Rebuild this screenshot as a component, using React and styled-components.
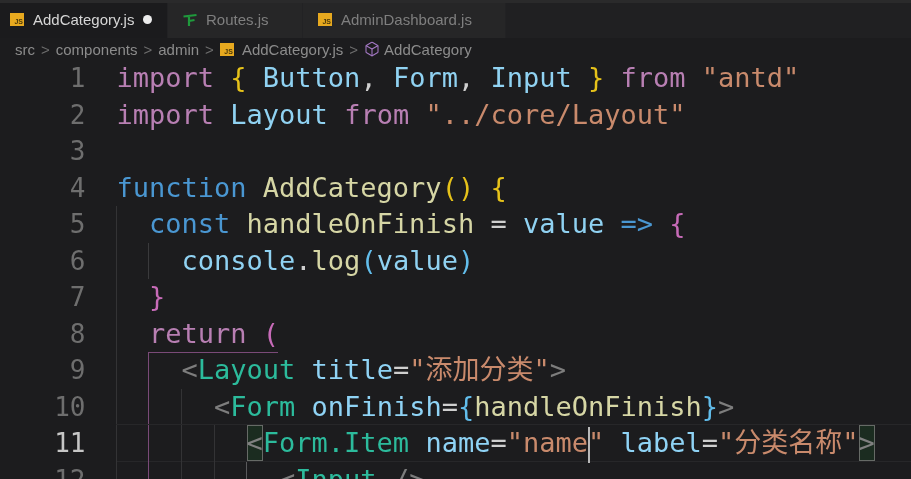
import React from "react";
import styled, { createGlobalStyle } from "styled-components";
import { Box } from "lucide-react";

const Global = createGlobalStyle`
  html, body { margin: 0; padding: 0; background: #1b1b1d; }
  body { width: 911px; height: 479px; overflow: hidden; }
`;

const Editor = styled.div`
  width: 911px;
  height: 479px;
  overflow: hidden;
  display: flex;
  flex-direction: column;
  background: #1c1c1e;
  filter: blur(0.45px);
`;

const TabBar = styled.div`
  display: flex;
  height: 35px;
  flex: none;
  border-top: 3px solid #2a2a2b;
  background: #202022;
`;

const Tab = styled.div`
  width: ${(p) => p.$w}px;
  flex: none;
  display: flex;
  align-items: center;
  gap: ${(p) => p.$gap || 9}px;
  padding-left: ${(p) => p.$pl || 10}px;
  padding-bottom: 2px;
  box-sizing: border-box;
  background: ${(p) => (p.$active ? "#1b1b1d" : "#262627")};
  color: ${(p) => (p.$active ? "#d6d6d6" : "#7f7f7f")};
  font: 15px "Liberation Sans", Arial, sans-serif;
  border-right: 1px solid #222224;
`;

const Dot = styled.span`
  width: 9px;
  height: 9px;
  border-radius: 50%;
  background: #ececec;
`;

const JsBadge = styled.span`
  width: 14px;
  height: 13px;
  flex: none;
  display: flex;
  align-items: flex-end;
  justify-content: flex-end;
  background: #e7a91f;
  color: #4a3808;
  font: bold 7px/8px "Liberation Sans", Arial, sans-serif;
  padding-right: 1px;
  box-sizing: border-box;
`;

const Crumbs = styled.div`
  display: flex;
  align-items: center;
  height: 22px;
  flex: none;
  padding-left: 15px;
  color: #8c8c8c;
  font: 15px "Liberation Sans", Arial, sans-serif;
  background: #1c1c1e;
`;

const Sep = styled.span`
  margin: 0 ${(p) => p.$r || 6}px 0 ${(p) => p.$l || 6}px;
  color: #6d6d6d;
`;

const CrumbIcon = styled.span`
  display: inline-flex;
  margin-right: ${(p) => p.$mr || 8}px;
  color: #a478c4;
`;

const Code = styled.div`
  font-family: "DejaVu Sans Mono", "Noto Sans CJK SC", monospace;
  font-size: 27px;
  line-height: 36.5px;
`;

const Line = styled.div`
  position: relative;
  display: flex;
  height: 36.5px;
  white-space: pre;
  box-sizing: border-box;
`;

const CurrentBand = styled.span`
  position: absolute;
  left: 116px;
  right: 0;
  top: -1px;
  bottom: 0;
  border-top: 1px solid #272729;
  border-bottom: 1px solid #272729;
`;

const Num = styled.span`
  width: 116.5px;
  flex: none;
  box-sizing: border-box;
  padding-right: 31px;
  text-align: right;
  font-size: 26px;
  color: ${(p) => (p.$current ? "#c6c6c6" : "#6e6e6e")};
`;

const Guide = styled.span`
  position: absolute;
  top: 0;
  bottom: 0;
  left: ${(p) => p.$x}px;
  width: 1px;
  background: ${(p) => p.$color || "#333335"};
`;

const BracketTop = styled.span`
  position: absolute;
  top: 0;
  left: 148px;
  width: 130px;
  height: 1px;
  background: #7a4a78;
`;

const T = styled.span`
  color: ${(p) => p.$c};
  position: relative;
`;

const Match = styled.span`
  color: #808080;
  background: #1b2c20;
  box-shadow: inset 0 0 0 1px #666a66;
  display: inline-block;
  height: 36px;
  vertical-align: top;
`;

const Cursor = styled.span`
  position: absolute;
  left: 0;
  top: 0;
  width: 2px;
  height: 36px;
  background: #b9b9b9;
`;

const KW = "#b87fb3";
const VAR = "#90d2f2";
const YEL = "#e6c21a";
const STR = "#c98a6c";
const FN = "#d6d6a5";
const BLUE = "#4a97d2";
const TXT = "#cfcfcf";
const TAG = "#2cbb9c";
const GR = "#7d7d7d";
const ATTR = "#8fd3f5";
const PINK = "#c76bb8";
const BR2 = "#62bdeb";

const lines = [
  [[KW, "import"], [TXT, " "], [YEL, "{"], [TXT, " "], [VAR, "Button"], [TXT, ", "], [VAR, "Form"], [TXT, ", "], [VAR, "Input"], [TXT, " "], [YEL, "}"], [TXT, " "], [KW, "from"], [TXT, " "], [STR, '"antd"']],
  [[KW, "import"], [TXT, " "], [VAR, "Layout"], [TXT, " "], [KW, "from"], [TXT, " "], [STR, '"../core/Layout"']],
  [],
  [[BLUE, "function"], [TXT, " "], [FN, "AddCategory"], [YEL, "()"], [TXT, " "], [YEL, "{"]],
  [[TXT, "  "], [BLUE, "const"], [TXT, " "], [FN, "handleOnFinish"], [TXT, " = "], [VAR, "value"], [TXT, " "], [BLUE, "=>"], [TXT, " "], [PINK, "{"]],
  [[TXT, "    "], [VAR, "console"], [TXT, "."], [FN, "log"], [BR2, "("], [VAR, "value"], [BR2, ")"]],
  [[TXT, "  "], [PINK, "}"]],
  [[TXT, "  "], [KW, "return"], [TXT, " "], [PINK, "("]],
  [[TXT, "    "], [GR, "<"], [TAG, "Layout"], [TXT, " "], [ATTR, "title"], [TXT, "="], [STR, '"添加分类"'], [GR, ">"]],
  [[TXT, "      "], [GR, "<"], [TAG, "Form"], [TXT, " "], [ATTR, "onFinish"], [TXT, "="], [BR2, "{"], [FN, "handleOnFinish"], [BR2, "}"], [GR, ">"]],
  null,
  [[TXT, "          "], [GR, "<"], [TAG, "Input"], [TXT, " "], [GR, "/>"]],
];

const guideMap = {
  4: [[116]],
  5: [[116], [148, "#3a3a3c"]],
  6: [[116]],
  7: [[116]],
  8: [[116], [148, "#7a4a78"]],
  9: [[116], [148, "#7a4a78"], [181]],
  10: [[116], [148, "#7a4a78"], [181], [214]],
  11: [[116], [148, "#7a4a78"], [181], [214], [246, "#5a5a5c"]],
};

function JsIcon() {
  return <JsBadge>JS</JsBadge>;
}

function RouteIcon() {
  return (
    <svg width="14" height="15" viewBox="0 0 14 15" fill="none" stroke="#1f9a3c" strokeWidth="2.2">
      <path d="M0.5 4.5L13.5 3M6 4V14M6 9L11.5 8" />
    </svg>
  );
}

export default function App() {
  return (
    <Editor>
      <Global />
      <TabBar>
        <Tab $active $w={168}>
          <JsIcon />
          <span>AddCategory.js</span>
          <Dot />
        </Tab>
        <Tab $w={135} $pl={15} $gap={9}>
          <RouteIcon />
          <span>Routes.js</span>
        </Tab>
        <Tab $w={203} $pl={15} $gap={9}>
          <JsIcon />
          <span>AdminDashboard.js</span>
        </Tab>
      </TabBar>
      <Crumbs>
        <span>src</span>
        <Sep>&gt;</Sep>
        <span>components</span>
        <Sep>&gt;</Sep>
        <span>admin</span>
        <Sep>&gt;</Sep>
        <CrumbIcon><JsIcon /></CrumbIcon>
        <span>AddCategory.js</span>
        <Sep>&gt;</Sep>
        <CrumbIcon $mr={4}><Box size={16} strokeWidth={1.6} /></CrumbIcon>
        <span>AddCategory</span>
      </Crumbs>
      <Code>
        {lines.map((toks, i) => (
          <Line key={i}>
            {i === 10 && <CurrentBand />}
            {(guideMap[i] || []).map(([x, c]) => (
              <Guide key={x} $x={x} $color={c} />
            ))}
            {i === 8 && <BracketTop />}
            <Num $current={i === 10}>{i + 1}</Num>
            <span>
              {toks === null ? (
                <>
                  <T $c={TXT}>{"        "}</T>
                  <Match>&lt;</Match>
                  <T $c={TAG}>Form.Item</T>
                  <T $c={TXT}> </T>
                  <T $c={ATTR}>name</T>
                  <T $c={TXT}>=</T>
                  <T $c={STR}>"name</T>
                  <T $c={STR}>"<Cursor /></T>
                  <T $c={TXT}> </T>
                  <T $c={ATTR}>label</T>
                  <T $c={TXT}>=</T>
                  <T $c={STR}>"分类名称"</T>
                  <Match>&gt;</Match>
                </>
              ) : (
                toks.map(([c, s], j) => (
                  <T key={j} $c={c}>{s}</T>
                ))
              )}
            </span>
          </Line>
        ))}
      </Code>
    </Editor>
  );
}
